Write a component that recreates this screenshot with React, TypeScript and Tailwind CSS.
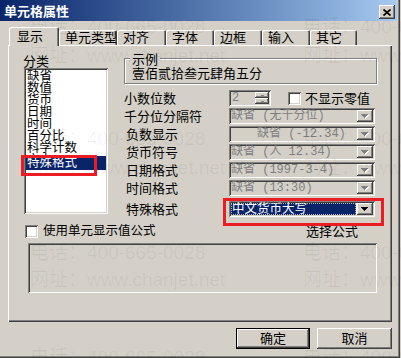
import React from 'react'

const sunken =
  'shadow-[inset_1px_1px_0_#808080,inset_-1px_-1px_0_#fff,inset_2px_2px_0_#404040,inset_-2px_-2px_0_#d4d0c8]'
const raised =
  'shadow-[inset_-1px_-1px_0_#404040,inset_1px_1px_0_#fff,inset_-2px_-2px_0_#808080,inset_2px_2px_0_#d4d0c8]'
const tabEdge = 'shadow-[inset_1px_1px_0_#fff,inset_-1px_0_0_#404040,inset_-2px_0_0_#808080]'
const mono = "font-['Liberation_Mono','Noto_Sans_CJK_SC',monospace]"

function Arrow({ disabled, up }: { disabled?: boolean; up?: boolean }) {
  const fill = disabled ? '#808080' : '#000'
  const rows = up ? [3, 2, 1, 0] : [0, 1, 2, 3]
  return (
    <svg width="8" height="5" viewBox="0 0 8 5" className="block">
      {disabled &&
        rows.map((r, i) => <rect key={'s' + i} x={r + 1} y={i + 1} width={7 - r * 2} height="1" fill="#fff" />)}
      {rows.map((r, i) => (
        <rect key={i} x={r} y={i} width={7 - r * 2} height="1" fill={fill} />
      ))}
    </svg>
  )
}

function DropButton({ disabled }: { disabled?: boolean }) {
  return (
    <div className={`w-[16px] h-[12px] shrink-0 bg-[#d4d0c8] ${raised} flex items-center justify-center`}>
      <Arrow disabled={disabled} />
    </div>
  )
}

function Combo({ text, indent }: { text: string; indent?: string }) {
  return (
    <div className={`w-[146px] h-[16px] bg-[#d4d0c8] ${sunken} p-[2px] flex`}>
      <div className={`flex-1 ${mono} text-[12px] leading-[12px] text-[#808080] whitespace-nowrap ${indent ?? ''}`}>
        {text}
      </div>
      <DropButton disabled />
    </div>
  )
}

function Checkbox() {
  return <div className={`w-[13px] h-[13px] shrink-0 bg-white ${sunken}`} />
}

const listItems = ['缺省', '数值', '货币', '日期', '时间', '百分比', '科学计数', '文本']

const tabs = [
  { label: '单元类型', w: 'w-[58px]' },
  { label: '对齐', w: 'w-[49px]' },
  { label: '字体', w: 'w-[48px]' },
  { label: '边框', w: 'w-[48px]' },
  { label: '输入', w: 'w-[48px]' },
  { label: '其它', w: 'w-[47px]' },
]

const comboRows = [
  { label: '千分位分隔符', text: '缺省 (无千分位)', pad: '', indent: '' },
  { label: '负数显示', text: '缺省 (-12.34)', pad: 'pl-[2px]', indent: 'pl-[26px]' },
  { label: '货币符号', text: '缺省 (人 12.34)', pad: 'pl-[2px]', indent: '' },
  { label: '日期格式', text: '缺省 (1997-3-4)', pad: 'pl-[2px]', indent: '' },
  { label: '时间格式', text: '缺省 (13:30)', pad: 'pl-[2px]', indent: '' },
]

const watermarkRows = [
  { top: 'top-[17px]', text: '电话：400-665-0028' },
  { top: 'top-[46px]', text: '网址：www.chanjet.net' },
  { top: 'top-[129px]', text: '电话：400-665-0028' },
  { top: 'top-[158px]', text: '网址：www.chanjet.net' },
  { top: 'top-[243px]', text: '电话：400-665-0028' },
  { top: 'top-[270px]', text: '网址：www.chanjet.net' },
  { top: 'top-[348px]', text: '电话：400-665-0028' },
]

export default function App() {
  return (
    <div className="relative w-[401px] h-[358px] overflow-hidden bg-[#d4d0c8] text-black text-[13px] font-['Liberation_Sans','Noto_Sans_CJK_SC',sans-serif]">
      <div className="w-[400px] h-[358px] shadow-[inset_-1px_-1px_0_#404040,inset_-2px_-2px_0_#808080]">
        {/* Title bar */}
        <div className="w-[397px] h-[21px] bg-linear-to-r from-[#0a246a] to-[#a6caf0] flex items-center justify-between pt-[3px] pl-[4px] pr-[2px]">
          <span className="text-white font-bold text-[13px] leading-[14px]">单元格属性</span>
          <div className={`w-[16px] h-[14px] bg-[#d4d0c8] ${raised} flex items-center justify-center`}>
            <svg width="8" height="7" viewBox="0 0 8 7">
              <path d="M0.5 0.5L7.5 6.5M7.5 0.5L0.5 6.5" stroke="#000" strokeWidth="1.7" />
            </svg>
          </div>
        </div>

        {/* Tabs */}
        <div className="mt-[6px] ml-[9px] h-[18px] flex items-end">
          <div className={`relative z-10 -mb-px w-[50px] h-[19px] bg-[#d4d0c8] rounded-t-[2px] ${tabEdge} pl-[8px] pt-[3px] leading-[13px]`}>
            显示
          </div>
          {tabs.map((t) => (
            <div key={t.label} className={`${t.w} h-[15px] rounded-t-[2px] ${tabEdge} pl-[6px] pt-[1px] leading-[13px] whitespace-nowrap`}>
              {t.label}
            </div>
          ))}
        </div>

        {/* Tab panel */}
        <div className="ml-[8px] w-[384px] h-[277px] bg-[#d4d0c8] shadow-[inset_1px_1px_0_#fff,inset_-1px_-1px_0_#404040,inset_-2px_-2px_0_#808080] pt-[10px]">
          <div className="flex">
            {/* Category list */}
            <div className="w-[116px] shrink-0 pl-[15px]">
              <div className="h-[13px] leading-[13px]">分类</div>
              <div className={`ml-[1px] w-[84px] h-[146px] bg-white ${sunken} pt-[2px] px-[2px] overflow-hidden`}>
                {listItems.map((item) => (
                  <div key={item} className="h-[12px] leading-[12px] pl-[1px] text-[12.5px] whitespace-nowrap">
                    {item}
                  </div>
                ))}
                <div className="relative -mt-[10px] h-[14px] leading-[14px] pl-[1px] text-[12.5px] bg-[#0a246a] text-white">
                  特殊格式
                </div>
              </div>
            </div>

            {/* Settings */}
            <div>
              <div className="relative mt-[3px] w-[253px] h-[26px] border border-[#808080] shadow-[inset_1px_1px_0_#fff,1px_1px_0_#fff] pl-[7px] pt-[8px]">
                <span className="absolute left-[5px] -top-[6px] bg-[#d4d0c8] px-[2px] leading-[13px]">示例</span>
                <div className="leading-[13px] whitespace-nowrap">壹佰贰拾叁元肆角五分</div>
              </div>

              <div className="mt-[5px]">
                <div className="h-[18px] flex items-center">
                  <div className="w-[105px] leading-[13px]">小数位数</div>
                  <div className={`w-[42px] h-[16px] bg-[#d4d0c8] ${sunken} p-[2px] flex`}>
                    <div className={`flex-1 ${mono} text-[12px] leading-[12px] text-[#808080] pl-[1px]`}>2</div>
                    <div className="w-[14px] flex flex-col">
                      <div className={`h-[6px] bg-[#d4d0c8] ${raised} flex items-center justify-center`}>
                        <div className="w-[3px] h-[1px] bg-[#808080]" />
                      </div>
                      <div className={`h-[6px] bg-[#d4d0c8] ${raised} flex items-center justify-center`}>
                        <div className="w-[3px] h-[1px] bg-[#808080]" />
                      </div>
                    </div>
                  </div>
                  <div className="ml-[17px] flex items-center">
                    <Checkbox />
                    <span className="ml-[4px] leading-[13px]">不显示零值</span>
                  </div>
                </div>

                {comboRows.map((r) => (
                  <div key={r.label} className="h-[18px] flex items-center">
                    <div className={`w-[105px] leading-[13px] whitespace-nowrap ${r.pad}`}>{r.label}</div>
                    <Combo text={r.text} indent={r.indent} />
                  </div>
                ))}

                <div className="mt-[3px] h-[18px] flex items-center">
                  <div className="w-[105px] leading-[13px] pl-[2px]">特殊格式</div>
                  <div className={`w-[146px] h-[16px] bg-white ${sunken} p-[2px] flex`}>
                    <div className="flex-1 mr-[1px] bg-[#0a246a] text-white text-[12.5px] leading-[12px] pl-[1px] whitespace-nowrap outline outline-1 outline-dotted outline-[#b8b4ac] -outline-offset-1">
                      中文货币大写
                    </div>
                    <DropButton />
                  </div>
                </div>
              </div>
            </div>
          </div>

          {/* Formula option */}
          <div className="mt-[7px] h-[13px] flex items-center">
            <div className="w-[298px] pl-[17px] flex items-center">
              <Checkbox />
              <span className="ml-[5px] leading-[13px] text-[12.5px]">使用单元显示值公式</span>
            </div>
            <span className="leading-[13px]">选择公式</span>
          </div>
          <div className={`mt-[5px] ml-[20px] w-[349px] h-[50px] ${sunken}`} />
        </div>

        {/* Dialog buttons */}
        <div className="mt-[6px] flex gap-[7px] pl-[236px]">
          <div className="w-[74px] h-[21px] border border-black">
            <div className={`w-full h-full ${raised} flex items-center justify-center leading-[13px]`}>确定</div>
          </div>
          <div className={`w-[75px] h-[21px] ${raised} flex items-center justify-center leading-[13px]`}>取消</div>
        </div>
      </div>

      {/* Watermark */}
      <div className="absolute inset-0 pointer-events-none text-black/[0.06] text-[19px] leading-[19px] whitespace-nowrap">
        {watermarkRows.map((w, i) => (
          <div key={i} className={`absolute left-0 ${w.top}`}>
            <span className="absolute left-[30px]">{w.text}</span>
            <span className="absolute left-[303px]">{w.text}</span>
          </div>
        ))}
      </div>

      {/* Red highlight boxes */}
      <div className="absolute left-[21px] top-[155px] w-[76px] h-[21px] border-[3px] border-[#ec1c24] pointer-events-none" />
      <div className="absolute left-[223px] top-[198px] w-[161px] h-[28px] border-[3px] border-[#ec1c24] pointer-events-none" />
    </div>
  )
}
